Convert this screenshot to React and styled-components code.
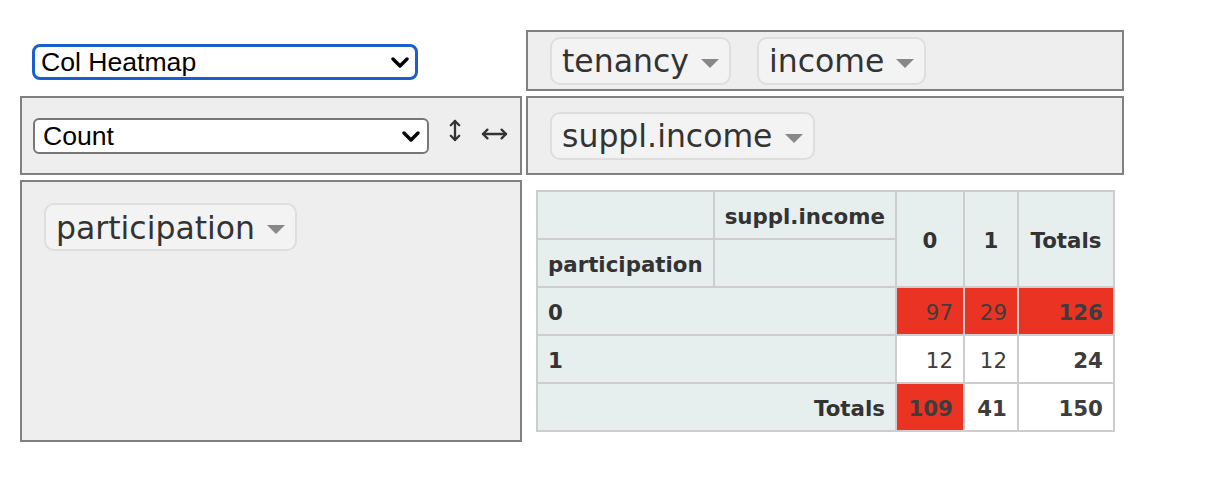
import React from 'react'
import styled, { createGlobalStyle } from 'styled-components'

const GlobalStyle = createGlobalStyle`
  html, body {
    margin: 0;
    padding: 0;
    background: #fff;
  }
  body {
    font-family: "DejaVu Sans", Verdana, sans-serif;
    color: #333;
  }
`

const RED = '#ea3323'

function Chevron() {
  return (
    <ChevronIcon width="18" height="11" viewBox="0 0 18 11">
      <polyline points="2,2 9,9 16,2" fill="none" stroke="#000" strokeWidth="3.4" strokeLinecap="round" strokeLinejoin="round" />
    </ChevronIcon>
  )
}

function Select({ value, options, width, focused }) {
  return (
    <SelectWrap $w={width}>
      <NativeSelect defaultValue={value} $focused={focused}>
        {options.map(o => <option key={o}>{o}</option>)}
      </NativeSelect>
      <Chevron />
    </SelectWrap>
  )
}

function Attr({ name }) {
  return (
    <AttrPill>
      {name}
      <Triangle />
    </AttrPill>
  )
}

function App() {
  return (
    <Page>
      <GlobalStyle />
      <Ui>
        <RendererCell>
          <Select value="Col Heatmap" width={386} focused options={['Table', 'Table Barchart', 'Heatmap', 'Row Heatmap', 'Col Heatmap']} />
        </RendererCell>
        <AxisBox>
          <Attr name="tenancy" />
          <Attr name="income" />
        </AxisBox>

        <ValsBox>
          <Select value="Count" width={396} options={['Count', 'Count Unique Values', 'Sum', 'Average']} />
          <OrderButton $lift={11}>
            <svg width="12" height="23" viewBox="0 0 12 23">
              <g fill="none" stroke="#333" strokeWidth="2.3" strokeLinecap="round" strokeLinejoin="round">
                <line x1="6" y1="2" x2="6" y2="21" />
                <polyline points="1.8,6.2 6,2 10.2,6.2" />
                <polyline points="1.8,16.8 6,21 10.2,16.8" />
              </g>
            </svg>
          </OrderButton>
          <OrderButton $lift={4}>
            <svg width="27" height="12" viewBox="0 0 27 12">
              <g fill="none" stroke="#333" strokeWidth="2.3" strokeLinecap="round" strokeLinejoin="round">
                <line x1="2" y1="6" x2="25" y2="6" />
                <polyline points="6.4,1.6 2,6 6.4,10.4" />
                <polyline points="20.6,1.6 25,6 20.6,10.4" />
              </g>
            </svg>
          </OrderButton>
        </ValsBox>
        <AxisBox>
          <Attr name="suppl.income" />
        </AxisBox>

        <AxisBox $top>
          <Attr name="participation" />
        </AxisBox>
        <Output>
          <PivotTable>
            <thead>
              <tr>
                <Th />
                <Th>suppl.income</Th>
                <Th rowSpan={2} $align="center" $w={46}>0</Th>
                <Th rowSpan={2} $align="center" $w={32}>1</Th>
                <Th rowSpan={2} $align="center" $w={74}>Totals</Th>
              </tr>
              <tr>
                <Th>participation</Th>
                <Th />
              </tr>
            </thead>
            <tbody>
              <tr>
                <Th colSpan={2}>0</Th>
                <Td $bg={RED}>97</Td>
                <Td $bg={RED}>29</Td>
                <Td $bg={RED} $bold>126</Td>
              </tr>
              <tr>
                <Th colSpan={2}>1</Th>
                <Td>12</Td>
                <Td>12</Td>
                <Td $bold>24</Td>
              </tr>
              <tr>
                <Th colSpan={2} $align="right">Totals</Th>
                <Td $bg={RED} $bold>109</Td>
                <Td $bold>41</Td>
                <Td $bold>150</Td>
              </tr>
            </tbody>
          </PivotTable>
        </Output>
      </Ui>
    </Page>
  )
}

export default App

const Page = styled.div`
  padding: 30px 0 0 20px;
`

const Ui = styled.div`
  display: grid;
  grid-template-columns: 502px 598px;
  grid-template-rows: 61px 79px auto;
  column-gap: 4px;
  row-gap: 5px;
`

const RendererCell = styled.div`
  display: flex;
  align-items: center;
  padding: 3px 0 0 12px;
`

const AxisBox = styled.div`
  box-sizing: border-box;
  border: 2px solid gray;
  background: #eee;
  display: flex;
  align-items: ${p => (p.$top ? 'flex-start' : 'center')};
  padding: ${p => (p.$top ? '21px 0 0 22px' : '0 0 0 22px')};
  gap: 26px;
`

const ValsBox = styled(AxisBox)`
  padding: 0 0 0 11px;
  gap: 20px;
`

const Output = styled.div`
  padding: 10px 0 10px 10px;
`

const SelectWrap = styled.div`
  position: relative;
  width: ${p => p.$w}px;
  height: 36px;
  flex: none;
`

const NativeSelect = styled.select`
  appearance: none;
  -webkit-appearance: none;
  box-sizing: border-box;
  width: 100%;
  height: 100%;
  margin: 0;
  background: #fff;
  color: #000;
  font-family: "Liberation Sans", Arial, sans-serif;
  font-size: 26.6px;
  outline: none;
  border: ${p => (p.$focused ? '3px solid #1b5fcd' : '2px solid #777')};
  border-radius: ${p => (p.$focused ? '8px' : '6px')};
  padding: ${p => (p.$focused ? '0 0 0 6px' : '0 0 0 8px')};
`

const ChevronIcon = styled.svg`
  position: absolute;
  right: 9px;
  top: 13px;
  pointer-events: none;
`

const OrderButton = styled.span`
  display: inline-flex;
  cursor: pointer;
  margin-bottom: ${p => p.$lift || 0}px;
`

const AttrPill = styled.span`
  display: inline-flex;
  align-items: center;
  box-sizing: border-box;
  height: 48px;
  padding: 1px 10px 0;
  background: #f3f3f3;
  border: 2px solid #dedede;
  border-radius: 10px;
  font-size: 31.5px;
  color: #333;
  white-space: nowrap;
  cursor: move;
`

const Triangle = styled.span`
  width: 0;
  height: 0;
  margin: 4px 0 0 12px;
  border-left: 9.5px solid transparent;
  border-right: 9.5px solid transparent;
  border-top: 9px solid #888;
`

const PivotTable = styled.table`
  border-collapse: collapse;
  font-family: "DejaVu Sans", Verdana, sans-serif;
  font-size: 21.33px;
  line-height: 26px;
  text-align: left;
`

const Th = styled.th`
  background: #e6eeee;
  border: 2px solid #cdcdcd;
  padding: 12px 10px 8px;
  color: #333;
  font-weight: bold;
  text-align: ${p => p.$align || 'left'};
  white-space: nowrap;
  ${p => (p.$w ? `width: ${p.$w}px;` : '')}
`

const Td = styled.td`
  background: ${p => p.$bg || '#fff'};
  border: 2px solid #cdcdcd;
  padding: 12px 10px 8px;
  color: #3d3d3d;
  text-align: right;
  vertical-align: top;
  font-weight: ${p => (p.$bold ? 'bold' : 'normal')};
`
